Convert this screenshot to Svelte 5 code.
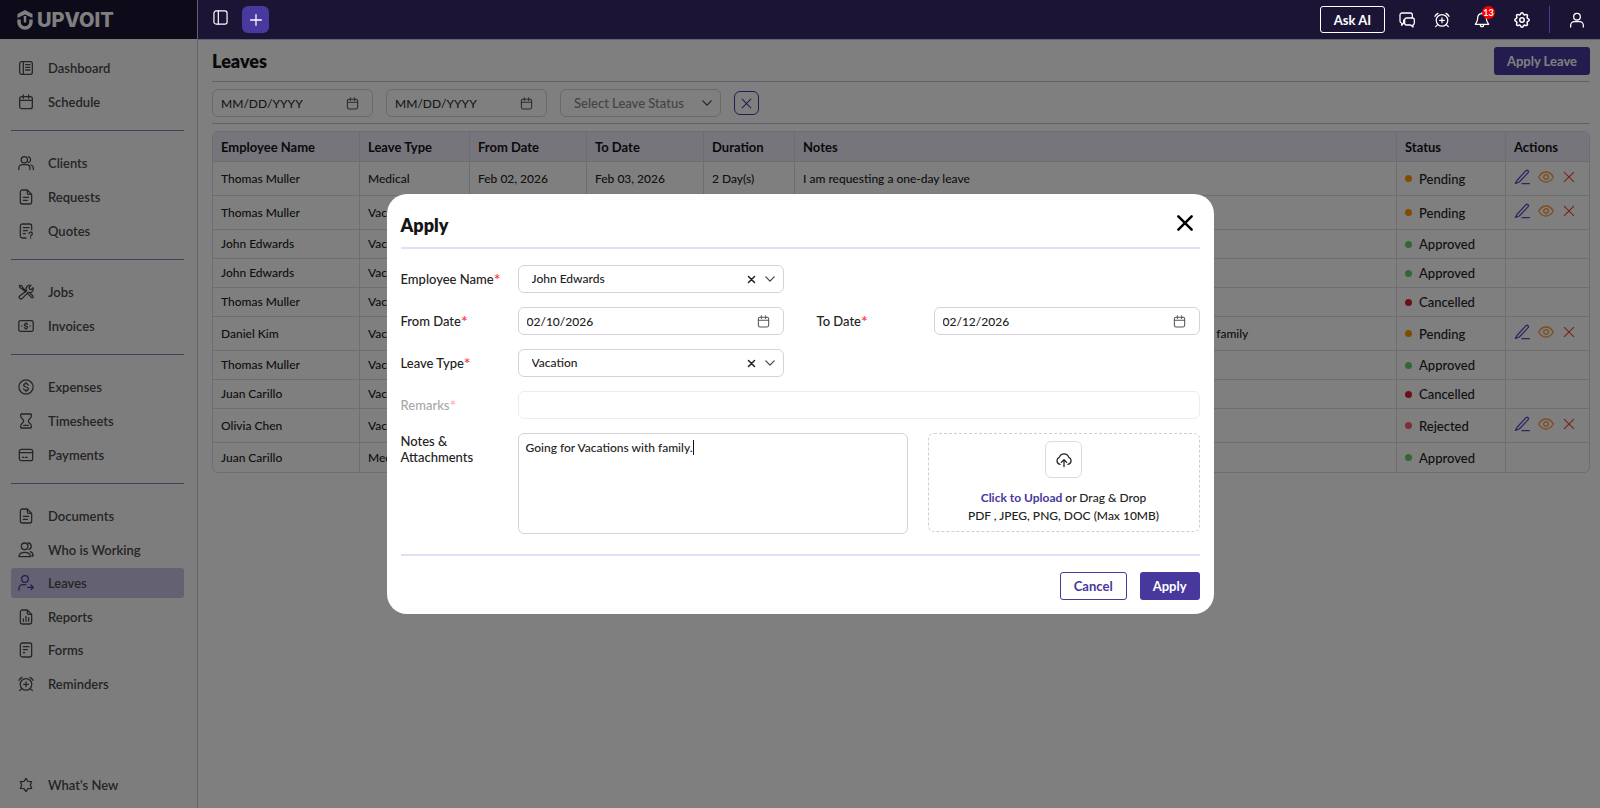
<script>
  let employee = $state('John Edwards');
  let leaveType = $state('Vacation');
  let fromDate = $state('02/10/2026');
  let toDate = $state('02/12/2026');
  let notes = $state('Going for Vacations with family.');
  let showModal = $state(true);

  const navGroups = [
    [
      { label: 'Dashboard', icon: 'dashboard' },
      { label: 'Schedule', icon: 'calendar' },
    ],
    [
      { label: 'Clients', icon: 'clients' },
      { label: 'Requests', icon: 'doc' },
      { label: 'Quotes', icon: 'quote' },
    ],
    [
      { label: 'Jobs', icon: 'tools' },
      { label: 'Invoices', icon: 'invoice' },
    ],
    [
      { label: 'Expenses', icon: 'dollar' },
      { label: 'Timesheets', icon: 'hourglass' },
      { label: 'Payments', icon: 'card' },
    ],
    [
      { label: 'Documents', icon: 'doc' },
      { label: 'Who is Working', icon: 'working' },
      { label: 'Leaves', icon: 'leave', active: true },
      { label: 'Reports', icon: 'report' },
      { label: 'Forms', icon: 'form' },
      { label: 'Reminders', icon: 'alarm' },
    ],
  ];

  const leaves = [
    { name: 'Thomas Muller', type: 'Medical', from: 'Feb 02, 2026', to: 'Feb 03, 2026', days: 2, notes: 'I am requesting a one-day leave', status: 'Pending' },
    { name: 'Thomas Muller', type: 'Vacation', from: 'Feb 04, 2026', to: 'Feb 05, 2026', days: 2, notes: '', status: 'Pending' },
    { name: 'John Edwards', type: 'Vacation', from: 'Jan 26, 2026', to: 'Jan 27, 2026', days: 2, notes: '', status: 'Approved' },
    { name: 'John Edwards', type: 'Vacation', from: 'Jan 19, 2026', to: 'Jan 20, 2026', days: 2, notes: '', status: 'Approved' },
    { name: 'Thomas Muller', type: 'Vacation', from: 'Jan 15, 2026', to: 'Jan 16, 2026', days: 2, notes: '', status: 'Cancelled' },
    { name: 'Daniel Kim', type: 'Vacation', from: 'Jan 12, 2026', to: 'Jan 14, 2026', days: 3, notes: 'I would like to request few days of vacation leave to spend some time with my family', status: 'Pending' },
    { name: 'Thomas Muller', type: 'Vacation', from: 'Jan 08, 2026', to: 'Jan 09, 2026', days: 2, notes: '', status: 'Approved' },
    { name: 'Juan Carillo', type: 'Vacation', from: 'Jan 06, 2026', to: 'Jan 07, 2026', days: 2, notes: '', status: 'Cancelled' },
    { name: 'Olivia Chen', type: 'Vacation', from: 'Jan 05, 2026', to: 'Jan 06, 2026', days: 2, notes: '', status: 'Rejected' },
    { name: 'Juan Carillo', type: 'Medical', from: 'Jan 02, 2026', to: 'Jan 02, 2026', days: 1, notes: '', status: 'Approved' },
  ];

  const hasActions = (status) => status === 'Pending' || status === 'Rejected';
  const close = () => (showModal = false);
</script>

{#snippet icon(name)}
  <svg class="icon" viewBox="0 0 24 24" aria-hidden="true">
    {#if name === 'dashboard'}
      <rect x="2.5" y="2.5" width="19" height="19" rx="3" /><path d="M8 2.5v19M11.5 7h6.5M11.5 11h6.5M11.5 15h6.5" />
    {:else if name === 'calendar'}
      <rect x="2.5" y="4" width="19" height="18" rx="3" /><path d="M2.5 9.5h19M8 1.5v5M16 1.5v5" />
    {:else if name === 'clients'}
      <circle cx="9.5" cy="7" r="4.7" /><path d="M1.2 22v-2.5a5 5 0 0 1 5-5h6.6a5 5 0 0 1 5 5V22M15.5 2.5a4.7 4.7 0 0 1 0 9M19.5 15a5 5 0 0 1 3.5 4.5V22" />
    {:else if name === 'doc'}
      <path d="M14 1.5H6.5a3 3 0 0 0-3 3v15a3 3 0 0 0 3 3h11a3 3 0 0 0 3-3V8zM14 1.5V6a2 2 0 0 0 2 2h4.5M8 12.5h8M8 17h6" />
    {:else if name === 'quote'}
      <path d="M12 22.5H6.5a3 3 0 0 1-3-3v-15a3 3 0 0 1 3-3h11a3 3 0 0 1 3 3V10M8 7h8.5M8 11.5h6M8 16h3M16.5 16a2.5 2.5 0 1 1 3.5 2.3c-.8.4-1 .9-1 1.5M19 22.5v.3" />
    {:else if name === 'tools'}
      <path d="M2 2l3.5.7 2 3.3 5 5M2 2l1 3.5L6.5 7.5l5 4.5M14.5 14.5l6 6a1.7 1.7 0 0 0 2-2.5L17 12.8M13 10a5.5 5.5 0 0 1 6.5-8l-3 3.3.7 2.5 2.5.7L22.5 5.5a5.5 5.5 0 0 1-7.3 7L6.5 21.5a2.4 2.4 0 0 1-4-3.5z" />
    {:else if name === 'invoice'}
      <rect x="1.2" y="4" width="21.6" height="16" rx="2.5" /><path d="M14.5 9.5c-.5-.8-1.4-1-2.5-1-1.5 0-2.5.6-2.5 1.7 0 2.5 5 1.2 5 3.7 0 1.1-1 1.7-2.5 1.7-1.2 0-2.1-.4-2.6-1.1M12 7v1.5M12 15.5V17M5.7 12h.2M18.2 12h.2" />
    {:else if name === 'dollar'}
      <circle cx="12" cy="12" r="10.7" /><path d="M15.5 9c-.5-1.2-1.8-2-3.5-2-2.1 0-3.5 1-3.5 2.5 0 3.5 7 1.5 7 5 0 1.5-1.4 2.5-3.5 2.5-1.8 0-3.2-.8-3.6-2.2M12 5v2M12 17v2" />
    {:else if name === 'hourglass'}
      <path d="M5 1.5h14a1 1 0 0 1 1 1v2c0 3-4.5 5-4.5 7.5S20 16 20 19.5v2a1 1 0 0 1-1 1H5a1 1 0 0 1-1-1v-2C4 16 8.5 14.5 8.5 12S4 7.5 4 4.5v-2a1 1 0 0 1 1-1zM8.5 18.5h7" />
    {:else if name === 'card'}
      <rect x="2" y="3.5" width="20" height="17" rx="3" /><path d="M2 8.5h20M6.5 15.5h2M11 15.5h3" />
    {:else if name === 'working'}
      <circle cx="10" cy="6.5" r="5" /><path d="M1.5 22c0-4 3.5-6.5 8.5-6.5s8.5 2.5 8.5 6.5zM15.5 1.5a5 5 0 0 1 1 9.7M18.5 14.5c2.5 1 4.2 3.5 4.2 6.5h-2" />
    {:else if name === 'leave'}
      <circle cx="10.5" cy="6" r="5" /><path d="M1.5 22.5V20a5.5 5.5 0 0 1 5.5-5.5h4.5M14.5 18.5h8M19.5 15l3.5 3.5-3.5 3.5" />
    {:else if name === 'report'}
      <path d="M14 1.5H6.5a3 3 0 0 0-3 3v15a3 3 0 0 0 3 3h11a3 3 0 0 0 3-3V8zM14 1.5V6a2 2 0 0 0 2 2h4.5M8 15v3.5M12 11v7.5M16 13v5.5" />
    {:else if name === 'form'}
      <rect x="3.5" y="1.5" width="17" height="21" rx="3" /><path d="M8 7h8.5M8 11.5h6M8 16h2" />
    {:else if name === 'alarm'}
      <circle cx="12" cy="12.5" r="8.7" /><path d="M12 9v7M8.5 12.5h7M1.5 6.5A10 10 0 0 1 6 2M22.5 6.5A10 10 0 0 0 18 2M5.5 19l-3 3M18.5 19l3 3" />
    {:else if name === 'star'}
      <path d="M12 2l3 4.5 5.5.3L18.5 12l2 5.2-5.5.3-3 4.5-3-4.5-5.5-.3 2-5.2-2-5.2 5.5-.3z" />
    {:else if name === 'panel'}
      <rect x="1.5" y="1.5" width="21" height="21" rx="3.5" /><path d="M8.5 1.5v21" />
    {:else if name === 'plus'}
      <path d="M12 4v16M4 12h16" />
    {:else if name === 'chat'}
      <path d="M7 12v4.5l-3 3.5v-3.500a3 3 0 0 1-2.500-3V4.500a3 3 0 0 1 3-3h12.500a3 3 0 0 1 3 3V9M11.500 9h8.500a3 3 0 0 1 3 3v4.500a3 3 0 0 1-2 2.800v3.200l-3.500-3h-6a3 3 0 0 1-3-3V12a3 3 0 0 1 3-3z" />
    {:else if name === 'bell'}
      <path d="M12 2.5c-4 0-6.5 3-6.5 7 0 5-1.5 6.5-3.5 9h20c-2-2.5-3.5-4-3.5-9 0-4-2.5-7-6.5-7zM9.5 19a2.5 3 0 0 0 5 0M12 1v1.5" />
    {:else if name === 'gear'}
      <g transform="matrix(1.2 0 0 1.2 -2.4 -2.4)">
        <path d="M10.325 4.317c.426-1.756 2.924-1.756 3.35 0a1.724 1.724 0 0 0 2.573 1.066c1.543-.94 3.31.826 2.37 2.37a1.724 1.724 0 0 0 1.065 2.572c1.756.426 1.756 2.924 0 3.35a1.724 1.724 0 0 0-1.066 2.573c.94 1.543-.826 3.31-2.37 2.37a1.724 1.724 0 0 0-2.572 1.065c-.426 1.756-2.924 1.756-3.35 0a1.724 1.724 0 0 0-2.573-1.066c-1.543.94-3.31-.826-2.37-2.37a1.724 1.724 0 0 0-1.065-2.572c-1.756-.426-1.756-2.924 0-3.35a1.724 1.724 0 0 0 1.066-2.573c-.94-1.543.826-3.31 2.37-2.37.996.608 2.296.07 2.572-1.065z" />
        <circle cx="12" cy="12" r="2.8" />
      </g>
    {:else if name === 'user'}
      <circle cx="12" cy="7" r="5" /><path d="M2.5 22.5V20a5.5 5.5 0 0 1 5.5-5.5h8a5.5 5.5 0 0 1 5.5 5.5v2.5" />
    {:else if name === 'close'}
      <path d="M4 4l16 16M20 4L4 20" />
    {:else if name === 'chevron'}
      <path d="M2 7l10 10L22 7" />
    {:else if name === 'edit'}
      <path d="M5 16.5L18 2.5a2.2 2.2 0 0 1 3.2 3L8 19.5l-6 2zM12 22h11" />
    {:else if name === 'eye'}
      <path d="M1 12c2.5-4.5 6.5-7.5 11-7.5s8.5 3 11 7.5c-2.5 4.5-6.5 7.5-11 7.5S3.500 16.5 1 12z" /><circle cx="12" cy="12" r="3.5" />
    {:else if name === 'upload'}
      <path d="M6 18.5a5.5 5.5 0 0 1-1-10.5 7.5 7.5 0 0 1 14.2 0A5.5 5.5 0 0 1 18 18.5M12 22v-10M8 15.5l4-4 4 4" />
    {/if}
  </svg>
{/snippet}

<div class="app">
  <aside class="sidebar">
    <div class="brand">
      <svg class="brand-mark" viewBox="0 0 32 40" aria-hidden="true">
        <path class="roof" d="M16 0L31 8v8l-15-7L1 16V8z" />
        <path class="cup" d="M4 19v5a12 12 0 0 0 24 0v-5" />
        <path class="stem" d="M16 12v13" />
      </svg>
      <span>UPVOIT</span>
    </div>
    <nav class="nav">
      {#each navGroups as group}
        <ul class="group">
          {#each group as item}
            <li>
              <a class="nav-item" class:active={item.active} href="#{item.icon}">
                {@render icon(item.icon)}
                {item.label}
              </a>
            </li>
          {/each}
        </ul>
      {/each}
    </nav>
    <a class="nav-item whats-new" href="#new">
      {@render icon('star')}
      What's New
    </a>
  </aside>

  <div class="page">
    <header class="topbar">
      <button class="bar-btn toggle" aria-label="Toggle sidebar">{@render icon('panel')}</button>
      <button class="add-btn" aria-label="Create">{@render icon('plus')}</button>
      <div class="bar-right">
        <button class="ask-btn">Ask AI</button>
        <div class="bar-icons">
          <button class="bar-btn" aria-label="Messages">{@render icon('chat')}</button>
          <button class="bar-btn" aria-label="Reminders">{@render icon('alarm')}</button>
          <button class="bar-btn bell" aria-label="Notifications">
            {@render icon('bell')}
            <span class="badge">13</span>
          </button>
          <button class="bar-btn" aria-label="Settings">{@render icon('gear')}</button>
          <span class="bar-sep"></span>
          <button class="bar-btn" aria-label="Account">{@render icon('user')}</button>
        </div>
      </div>
    </header>

    <main class="content">
      <div class="title-row">
        <h1>Leaves</h1>
        <button class="btn primary">Apply Leave</button>
      </div>

      <div class="filters">
        <div class="control">
          <input type="text" aria-label="From date" placeholder="MM/DD/YYYY" />
          <button class="icon-btn cal" aria-label="Pick from date">{@render icon('calendar')}</button>
        </div>
        <div class="control">
          <input type="text" aria-label="To date" placeholder="MM/DD/YYYY" />
          <button class="icon-btn cal" aria-label="Pick to date">{@render icon('calendar')}</button>
        </div>
        <div class="control muted">
          <select aria-label="Leave status">
            <option>Select Leave Status</option>
            <option>Pending</option>
            <option>Approved</option>
            <option>Cancelled</option>
            <option>Rejected</option>
          </select>
          <span class="chevron">{@render icon('chevron')}</span>
        </div>
        <button class="reset-btn" aria-label="Clear filters">{@render icon('close')}</button>
      </div>

      <table class="leaves">
        <colgroup>
          <col class="c-name" /><col class="c-type" /><col class="c-date" /><col class="c-date" />
          <col class="c-days" /><col /><col class="c-status" /><col class="c-actions" />
        </colgroup>
        <thead>
          <tr>
            <th>Employee Name</th>
            <th>Leave Type</th>
            <th>From Date</th>
            <th>To Date</th>
            <th>Duration</th>
            <th>Notes</th>
            <th>Status</th>
            <th>Actions</th>
          </tr>
        </thead>
        <tbody>
          {#each leaves as row}
            <tr class:tall={hasActions(row.status)}>
              <td>{row.name}</td>
              <td>{row.type}</td>
              <td>{row.from}</td>
              <td>{row.to}</td>
              <td>{row.days} Day(s)</td>
              <td>{row.notes}</td>
              <td><span class="status {row.status.toLowerCase()}">{row.status}</span></td>
              <td>
                {#if hasActions(row.status)}
                  <div class="actions">
                    <button class="icon-btn edit" aria-label="Edit">{@render icon('edit')}</button>
                    <button class="icon-btn view" aria-label="View">{@render icon('eye')}</button>
                    <button class="icon-btn remove" aria-label="Cancel leave">{@render icon('close')}</button>
                  </div>
                {/if}
              </td>
            </tr>
          {/each}
        </tbody>
      </table>
    </main>
  </div>

  {#if showModal}
    <div class="overlay"></div>
    <div class="modal-wrap">
      <div class="modal" role="dialog" aria-modal="true" aria-labelledby="modal-title">
        <div class="modal-head">
          <h2 id="modal-title">Apply</h2>
          <button class="icon-btn modal-close" aria-label="Close" onclick={close}>{@render icon('close')}</button>
        </div>

        <div class="form">
          <div class="field">
            <label for="employee">Employee Name<em>*</em></label>
            <div class="control">
              <select id="employee" bind:value={employee}>
                <option>John Edwards</option>
                <option>Thomas Muller</option>
                <option>Daniel Kim</option>
              </select>
              <button class="icon-btn clear" aria-label="Clear employee" onclick={() => (employee = '')}>{@render icon('close')}</button>
              <span class="chevron">{@render icon('chevron')}</span>
            </div>
          </div>
          <div class="field from">
            <label for="from">From Date<em>*</em></label>
            <div class="control">
              <input id="from" type="text" bind:value={fromDate} />
              <button class="icon-btn cal" aria-label="Pick start date">{@render icon('calendar')}</button>
            </div>
          </div>
          <div class="field">
            <label for="to">To Date<em>*</em></label>
            <div class="control">
              <input id="to" type="text" bind:value={toDate} />
              <button class="icon-btn cal" aria-label="Pick end date">{@render icon('calendar')}</button>
            </div>
          </div>
          <div class="field from">
            <label for="type">Leave Type<em>*</em></label>
            <div class="control">
              <select id="type" bind:value={leaveType}>
                <option>Vacation</option>
                <option>Medical</option>
              </select>
              <button class="icon-btn clear" aria-label="Clear leave type" onclick={() => (leaveType = '')}>{@render icon('close')}</button>
              <span class="chevron">{@render icon('chevron')}</span>
            </div>
          </div>
          <div class="field wide disabled">
            <label for="remarks">Remarks<em>*</em></label>
            <div class="control"><input id="remarks" type="text" disabled /></div>
          </div>
          <div class="field wide notes-field">
            <label for="notes">Notes & Attachments</label>
            <div class="notes-row">
              <div class="notes-box">
                <textarea id="notes" bind:value={notes}></textarea>
                <div class="caret-layer" aria-hidden="true"><span>{notes}</span><i></i></div>
              </div>
              <div class="dropzone">
                <span class="upload-icon">{@render icon('upload')}</span>
                <p><a href="#upload">Click to Upload</a> or Drag & Drop</p>
                <p>PDF , JPEG, PNG, DOC (Max 10MB)</p>
              </div>
            </div>
          </div>
        </div>

        <div class="modal-foot">
          <button class="btn outline" onclick={close}>Cancel</button>
          <button class="btn primary">Apply</button>
        </div>
      </div>
    </div>
  {/if}
</div>

<style>
  :global(body) {
    margin: 0;
    background: #fff;
  }

  .app {
    display: flex;
    min-height: 100vh;
    font-family: Lato, "Liberation Sans", sans-serif;
    font-size: 13px;
    line-height: 16px;
    font-weight: 500;
    color: #222;
  }

  .app :global(*) {
    box-sizing: border-box;
  }

  h1, h2, p, ul {
    margin: 0;
    padding: 0;
  }

  button, input, select, textarea {
    font: inherit;
    color: inherit;
    background: none;
    border: 0;
    padding: 0;
    margin: 0;
    outline: none;
  }

  button {
    cursor: pointer;
  }

  .icon {
    display: block;
    width: 16px;
    height: 16px;
    fill: none;
    stroke: currentColor;
    stroke-width: 1.9;
    stroke-linecap: round;
    stroke-linejoin: round;
    flex: none;
  }

  /* sidebar */
  .sidebar {
    width: 198px;
    flex: none;
    display: flex;
    flex-direction: column;
    background: #fbfbfb;
    border-right: 1px solid #c8c4e4;
  }

  .brand {
    height: 39px;
    display: flex;
    align-items: center;
    gap: 4px;
    padding-left: 17px;
    background: #1a1433;
    color: #fff;
    font-family: Inter, "Open Sans", sans-serif;
    font-size: 20px;
    font-weight: 800;
  }

  .brand-mark {
    width: 16px;
    height: 20px;
    fill: none;
    stroke: #fff;
  }

  .roof {
    fill: #fff;
    stroke: none;
  }

  .cup {
    stroke-width: 7;
  }

  .stem {
    stroke-width: 5;
  }

  .nav {
    flex: 1;
    padding: 14px 13px 0 11px;
  }

  .group {
    list-style: none;
    display: flex;
    flex-direction: column;
    gap: 4px;
    padding-bottom: 13px;
    margin-bottom: 17px;
    border-bottom: 1px solid #8a80c4;
  }

  .group:last-child {
    border: 0;
    gap: 3px;
  }

  .group:last-child li:nth-child(odd) {
    padding-bottom: 1px;
  }

  .nav-item {
    height: 30px;
    display: flex;
    align-items: center;
    gap: 14px;
    padding-left: 7px;
    border-radius: 3px;
    color: #4a4a4a;
    font-weight: 600;
    text-decoration: none;
  }

  .nav-item.active {
    background: #c8c2e6;
  }

  .nav-item.active :global(.icon) {
    color: #46389c;
  }

  .whats-new {
    margin: 0 13px 8px 11px;
  }

  /* top bar */
  .page {
    flex: 1;
    min-width: 0;
  }

  .topbar {
    position: relative;
    z-index: 20;
    height: 39px;
    display: flex;
    align-items: center;
    gap: 14px;
    padding: 0 15px;
    background: #1b1435;
    color: #fff;
  }

  .bar-right {
    margin-left: auto;
    display: flex;
    align-items: center;
    gap: 14px;
  }

  .bar-icons {
    display: flex;
    align-items: center;
    gap: 19px;
  }

  .bar-btn {
    position: relative;
    display: flex;
  }

  .toggle {
    padding-bottom: 4px;
  }

  .toggle :global(.icon) {
    width: 15px;
    height: 15px;
  }

  .bell {
    padding: 0 5px;
  }

  .add-btn {
    width: 27px;
    height: 27px;
    display: flex;
    align-items: center;
    justify-content: center;
    border-radius: 6px;
    background: #48399f;
  }

  .ask-btn {
    width: 65px;
    height: 27px;
    border: 1px solid #fff;
    border-radius: 3px;
    font-weight: 700;
  }

  .badge {
    position: absolute;
    top: -6px;
    right: 0;
    width: 13px;
    height: 13px;
    border-radius: 50%;
    background: #f00;
    font-size: 9px;
    line-height: 13px;
    font-weight: 700;
    text-align: center;
  }

  .bar-sep {
    width: 1px;
    height: 27px;
    background: #463a9c;
  }

  /* page content */
  .content {
    padding: 0 10px 0 14px;
    border-top: 1px solid #c8c4e4;
  }

  .title-row {
    height: 42px;
    display: flex;
    align-items: center;
    justify-content: space-between;
    border-bottom: 1px solid #c4c1de;
  }

  h1, h2 {
    font-size: 18px;
    line-height: 24px;
    font-weight: 800;
    color: #141414;
  }

  .btn {
    height: 28px;
    padding: 0 13px;
    border-radius: 3px;
    font-weight: 700;
  }

  .primary {
    background: #47389d;
    color: #fff;
  }

  .outline {
    border: 1px solid #47389d;
    color: #47389d;
  }

  .filters {
    display: flex;
    align-items: center;
    gap: 13px;
    padding: 7px 0 6px;
    border-bottom: 1px solid #c4c1de;
  }

  .filters .control {
    width: 161px;
  }

  .control {
    height: 28px;
    display: flex;
    align-items: center;
    border: 1px solid #d3d3d8;
    border-radius: 6px;
    padding: 0 8px;
    min-width: 0;
  }

  .control input,
  .control select {
    flex: 1;
    min-width: 0;
    width: 100%;
    height: 26px;
    font-size: 12px;
    appearance: none;
  }

  .control input::placeholder {
    color: #333;
    opacity: 1;
  }

  .control select {
    padding-left: 5px;
  }

  .muted {
    color: #888;
  }

  .muted select {
    font-size: 13px;
  }

  .icon-btn {
    display: flex;
  }

  .cal {
    margin-right: 5px;
    color: #555;
  }

  .cal :global(.icon) {
    width: 13px;
    height: 13px;
  }

  .chevron {
    color: #444;
    pointer-events: none;
  }

  .chevron :global(.icon) {
    width: 10px;
    height: 10px;
    stroke-width: 3;
  }

  .clear {
    margin-right: 9px;
  }

  .clear :global(.icon) {
    width: 9px;
    height: 9px;
    stroke-width: 4;
  }

  .reset-btn {
    width: 25px;
    height: 24px;
    display: flex;
    align-items: center;
    justify-content: center;
    border: 1px solid #47389d;
    border-radius: 6px;
    color: #47389d;
  }

  .reset-btn :global(.icon) {
    width: 13px;
    height: 13px;
  }

  /* table */
  .leaves {
    width: 100%;
    margin-top: 7px;
    table-layout: fixed;
    border-collapse: separate;
    border-spacing: 0;
    border: 1px solid #dcdce0;
    border-radius: 6px;
    overflow: hidden;
  }

  .c-name { width: 147px; }
  .c-type { width: 110px; }
  .c-date { width: 117px; }
  .c-days { width: 91px; }
  .c-status { width: 109px; }
  .c-actions { width: 83px; }

  th, td {
    height: 29px;
    padding: 0 8px;
    text-align: left;
    border-right: 1px solid #dcdce0;
    border-bottom: 1px solid #dcdce0;
    white-space: nowrap;
  }

  td {
    font-size: 12px;
  }

  th {
    height: 30px;
    background: #ecebf9;
    font-weight: 700;
    color: #141414;
  }

  .tall td {
    height: 34px;
  }

  th:last-child, td:last-child {
    border-right: 0;
  }

  tbody tr:last-child td {
    border-bottom: 0;
  }

  .status {
    display: flex;
    align-items: center;
    gap: 7px;
    font-size: 13px;
  }

  .status::before {
    content: '';
    width: 7px;
    height: 7px;
    border-radius: 50%;
    background: currentColor;
  }

  .pending::before { background: #ff9800; }
  .approved::before { background: #66d06a; }
  .cancelled::before { background: #d81f2f; }
  .rejected::before { background: #f4606a; }

  .actions {
    display: flex;
    align-items: center;
    gap: 8px;
    padding-bottom: 3px;
  }

  .edit { color: #5a4bc0; }
  .view { color: #ff9838; }
  .remove { color: #f04438; }

  .remove :global(.icon) {
    width: 14px;
    height: 14px;
  }

  /* modal */
  .overlay {
    position: fixed;
    inset: 0;
    z-index: 10;
    background: rgba(0, 0, 0, 0.5);
  }

  .modal-wrap {
    position: fixed;
    inset: 0;
    z-index: 30;
    display: flex;
    align-items: center;
    justify-content: center;
    pointer-events: none;
  }

  .modal {
    width: 100%;
    max-width: 827px;
    padding: 14px;
    border-radius: 20px;
    background: #fff;
    pointer-events: auto;
  }

  .modal-head {
    display: flex;
    align-items: flex-start;
    justify-content: space-between;
    padding: 5px 5px 10px 0;
    border-bottom: 2px solid #e2e0f5;
  }

  .modal-close {
    color: #000;
  }

  .modal-close :global(.icon) {
    width: 20px;
    height: 20px;
    stroke-width: 3;
  }

  .form {
    display: grid;
    grid-template-columns: 1fr 1fr;
    gap: 14px 33px;
    padding: 16px 0 20px;
  }

  .field {
    display: grid;
    grid-template-columns: 117px 1fr;
    align-items: center;
  }

  .from {
    grid-column-start: 1;
  }

  .wide {
    grid-column: 1 / -1;
  }

  label em {
    color: #f33;
    font-size: 16px;
    font-style: normal;
    vertical-align: bottom;
  }

  .disabled {
    opacity: 0.4;
  }

  .notes-field {
    align-items: start;
  }

  .notes-row {
    display: grid;
    grid-template-columns: 1fr 272px;
    gap: 20px;
    align-items: start;
    font-size: 12px;
  }

  .notes-box {
    position: relative;
    height: 101px;
  }

  textarea,
  .caret-layer {
    width: 100%;
    height: 100%;
    padding: 6px 7px;
    border: 1px solid #d3d3d8;
    border-radius: 6px;
    line-height: 16px;
    resize: none;
    display: block;
  }

  .caret-layer {
    position: absolute;
    inset: 0;
    border-color: transparent;
    pointer-events: none;
  }

  .caret-layer span {
    visibility: hidden;
  }

  .caret-layer i {
    display: inline-block;
    width: 1px;
    height: 15px;
    vertical-align: top;
    background: #111;
  }

  .dropzone {
    height: 99px;
    display: flex;
    flex-direction: column;
    align-items: center;
    border: 1px dashed #cfcfcf;
    border-radius: 6px;
    padding-top: 7px;
    line-height: 18px;
  }

  .upload-icon {
    width: 37px;
    height: 37px;
    display: flex;
    align-items: center;
    justify-content: center;
    margin-bottom: 11px;
    border: 1px solid #dcdce0;
    border-radius: 6px;
  }

  .dropzone a {
    color: #47389d;
    font-weight: 700;
    text-decoration: none;
  }

  .modal-foot {
    display: flex;
    justify-content: flex-end;
    gap: 13px;
    padding-top: 16px;
    border-top: 2px solid #e2e0f5;
  }
</style>
